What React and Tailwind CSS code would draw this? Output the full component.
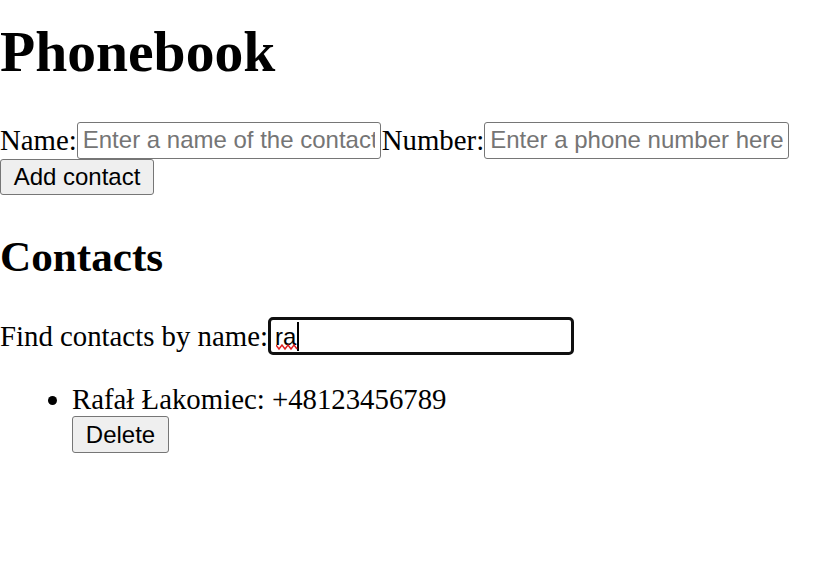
export default function App() {
  return (
    <div className="font-['Liberation_Serif',serif] text-[28.8px] leading-[33px] text-black bg-white min-h-[573px] w-[814px]">
      <h1 className="text-[57.6px] font-bold leading-[66px] pt-[19px]">Phonebook</h1>
      <div className="mt-[37px] flex items-center h-[36px] whitespace-nowrap">
        <span>Name:</span>
        <input
          className="w-[304px] h-[37px] border border-[#767676] rounded-[3px] px-[5px] font-['Liberation_Sans',sans-serif] text-[24px] placeholder:text-[#757575] outline-none"
          placeholder="Enter a name of the contact here"
        />
        <span className="ml-[1px]">Number:</span>
        <input
          className="w-[305px] h-[37px] border border-[#767676] rounded-[3px] px-[5px] font-['Liberation_Sans',sans-serif] text-[24px] placeholder:text-[#757575] outline-none"
          placeholder="Enter a phone number here"
        />
      </div>
      <button className="mt-[1px] block w-[154px] h-[36px] bg-[#efefef] border border-[#767676] rounded-[3px] font-['Liberation_Sans',sans-serif] text-[24px] leading-none text-black">
        Add contact
      </button>
      <h2 className="mt-[37px] text-[43.2px] font-bold leading-[50px]">Contacts</h2>
      <div className="mt-[35px] flex items-center h-[38px] whitespace-nowrap">
        <span>Find contacts by name:</span>
        <div className="relative w-[306px] h-[38px] border-[3px] border-[#101010] rounded-[5px] flex items-center pl-[4px] font-['Liberation_Sans',sans-serif] text-[24px]">
          <span className="relative">
            ra
            <svg className="absolute left-[1px] top-[24px]" width="22" height="7" viewBox="0 0 22 7">
              <path d="M0 1 L3 5 L6 1 L9 5 L12 1 L15 5 L18 1 L21 5" fill="none" stroke="#e02020" strokeWidth="1.4" />
            </svg>
          </span>
          <span className="w-[2px] h-[29px] bg-black ml-[1px]" />
        </div>
      </div>
      <ul className="mt-[28px] list-disc pl-[72px]">
        <li>
          <div>Rafał Łakomiec: +48123456789</div>
          <button className="block w-[97px] h-[37px] bg-[#efefef] border border-[#767676] rounded-[3px] font-['Liberation_Sans',sans-serif] text-[24px] leading-none text-black">
            Delete
          </button>
        </li>
      </ul>
    </div>
  );
}
